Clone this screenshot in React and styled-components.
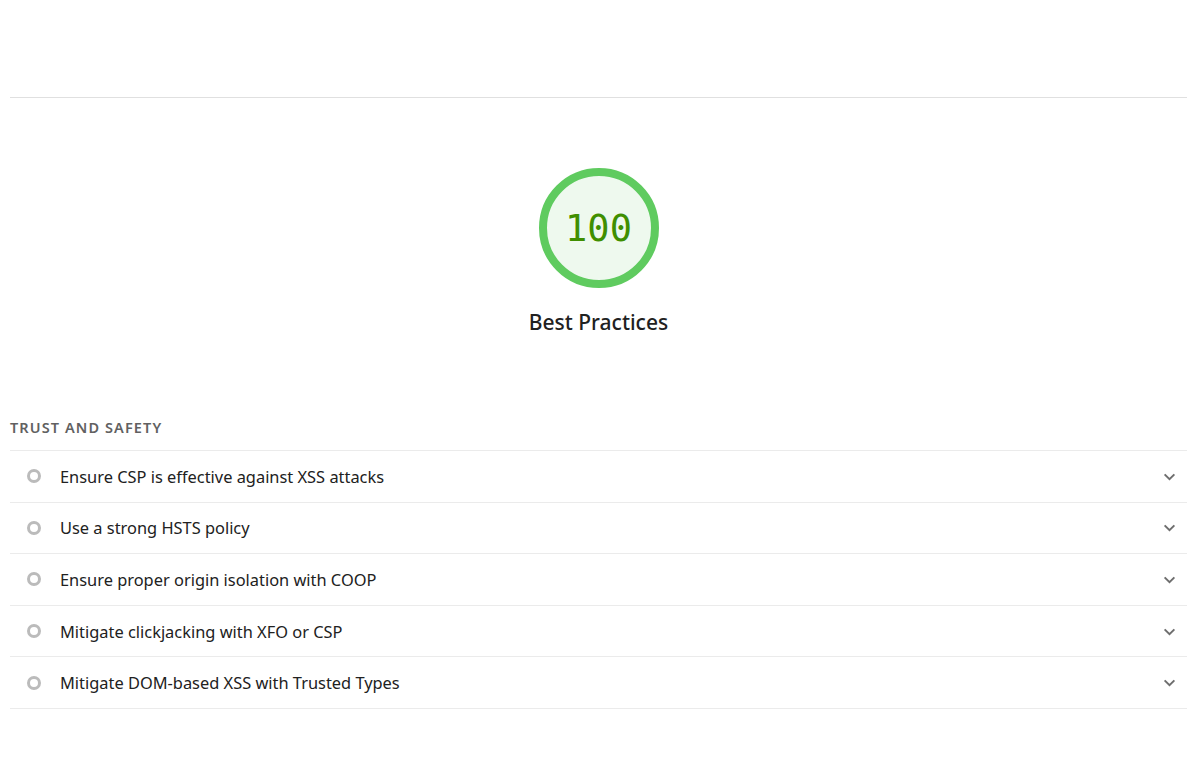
import React from "react";
import styled, { createGlobalStyle } from "styled-components";

const Global = createGlobalStyle`
  body {
    margin: 0;
    background: #fff;
    font-family: "Noto Sans", "Open Sans", sans-serif;
    color: #212121;
  }
`;

const audits = [
  "Ensure CSP is effective against XSS attacks",
  "Use a strong HSTS policy",
  "Ensure proper origin isolation with COOP",
  "Mitigate clickjacking with XFO or CSP",
  "Mitigate DOM-based XSS with Trusted Types",
];

export default function App() {
  return (
    <>
      <Global />
      <Page>
        <Divider />
        <Header>
          <Gauge>
            <svg width="120" height="120" viewBox="0 0 120 120">
              <circle cx="60" cy="60" r="56" fill="#eef9ee" stroke="#5fcb5f" strokeWidth="8" />
            </svg>
            <Score>100</Score>
          </Gauge>
          <Title>Best Practices</Title>
        </Header>
        <Group>
          <GroupTitle>Trust and Safety</GroupTitle>
          <List>
            {audits.map((a) => (
              <Row key={a}>
                <Marker />
                <Label>{a}</Label>
                <Chevron viewBox="0 0 12 12" width="13" height="13">
                  <path d="M1.5 4 L6 8.5 L10.5 4" fill="none" stroke="#6e6e6e" strokeWidth="1.8" />
                </Chevron>
              </Row>
            ))}
          </List>
        </Group>
      </Page>
    </>
  );
}

const Page = styled.div`
  padding: 97px 8px 0 10px;
`;

const Divider = styled.div`
  height: 1px;
  background: #e0e0e0;
`;

const Header = styled.div`
  display: flex;
  flex-direction: column;
  align-items: center;
  padding-top: 70px;
`;

const Gauge = styled.div`
  position: relative;
  width: 120px;
  height: 120px;
  svg {
    display: block;
  }
`;

const Score = styled.div`
  position: absolute;
  inset: 0;
  display: flex;
  align-items: center;
  justify-content: center;
  font-family: "DejaVu Sans Mono", "Liberation Mono", monospace;
  font-size: 37px;
  color: #3f8f00;
`;

const Title = styled.div`
  margin-top: 20px;
  font-size: 21px;
  font-weight: 500;
  color: #212121;
`;

const Group = styled.div`
  margin-top: 81px;
`;

const GroupTitle = styled.div`
  font-size: 14.5px;
  font-weight: 600;
  letter-spacing: 1.1px;
  text-transform: uppercase;
  color: #616161;
  padding-bottom: 13px;
`;

const List = styled.div`
  border-top: 1px solid #ebebeb;
`;

const Row = styled.div`
  display: flex;
  align-items: center;
  height: 50.6px;
  border-bottom: 1px solid #ebebeb;
  padding: 0 11px 0 17px;
`;

const Marker = styled.span`
  width: 8px;
  height: 8px;
  border-radius: 50%;
  border: 3px solid #bbbbbb;
  flex: none;
`;

const Label = styled.span`
  flex: 1;
  margin-left: 19px;
  font-size: 16.4px;
  color: #212121;
`;

const Chevron = styled.svg`
  flex: none;
`;
